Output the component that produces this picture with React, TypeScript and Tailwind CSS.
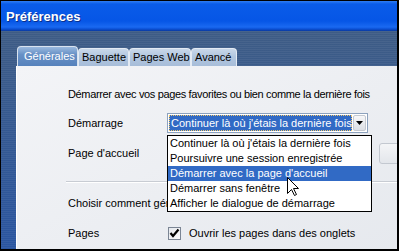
const startOptions = [
  "Continuer là où j'étais la dernière fois",
  'Poursuivre une session enregistrée',
  "Démarrer avec la page d'accueil",
  'Démarrer sans fenêtre',
  'Afficher le dialogue de démarrage',
];

const tabs = [
  { label: 'Générales', width: 'w-[61px]', active: true },
  { label: 'Baguette', width: 'w-[51px]', active: false },
  { label: 'Pages Web', width: 'w-[62px]', active: false },
  { label: 'Avancé', width: 'w-[46px]', active: false },
];

export default function App() {
  return (
    <div className="w-[399px] h-[251px] overflow-hidden bg-black font-['Liberation_Sans',Arial,sans-serif] text-[11px] leading-[13px] text-black">
      <div className="w-[396px] h-[248px] ml-px mt-px flex flex-col">
        {/* TITLE BAR */}
        <div className="h-[30px] shrink-0 pl-[5px] pt-[8px] bg-[linear-gradient(to_bottom,#2f7ef4_0px,#0a5ce9_3px,#0656e6_20px,#1a69f1_26px,#0b50d6_28px,#0a3a9e_30px)]">
          <span className="text-white font-bold text-[13px] leading-[16px] [text-shadow:1px_1px_#0b2f8a]">Préférences</span>
        </div>

        {/* BODY */}
        <div className="flex-1 flex flex-col pl-[15px] pt-[15px] bg-[repeating-linear-gradient(to_bottom,rgba(255,255,255,0.05)_0px,rgba(255,255,255,0.05)_1px,transparent_1px,transparent_2px),linear-gradient(to_bottom,#3e5c85,#2a55a0)]">
          {/* TABS */}
          <div className="h-[20px] ml-px flex items-end">
            {tabs.map((t) =>
              t.active ? (
                <div
                  key={t.label}
                  className={`${t.width} h-[20px] pl-[6px] pt-[3px] rounded-t-[4px] border border-b-0 border-[#d9e3ef] bg-[linear-gradient(to_bottom,#9ab9de,#6790c6_40%,#5682bc)] text-white`}
                >
                  {t.label}
                </div>
              ) : (
                <div
                  key={t.label}
                  className={`${t.width} h-[18px] pl-[3px] pt-[2px] rounded-t-[4px] border border-b-0 border-[#e3eaf3] bg-[linear-gradient(to_bottom,#c9d8ea,#b1c6df_45%,#a7bdd9)]`}
                >
                  {t.label}
                </div>
              ),
            )}
          </div>

          {/* PANEL */}
          <div className="flex-1 relative overflow-hidden border-l border-white bg-[linear-gradient(to_bottom_right,#f3f4f7,#e6e9ee)] pl-[51px] pt-[22px]">
            <div className="h-[13px] whitespace-nowrap tracking-[-0.35px]">Démarrer avec vos pages favorites ou bien comme la dernière fois</div>

            {/* Démarrage */}
            <div className="mt-[12px] h-[20px] flex items-center">
              <div className="w-[99px] shrink-0">Démarrage</div>
              <div className="w-[201px] h-[20px] shrink-0 border border-[#8da2bd] bg-white p-px flex gap-px">
                <div className="w-[183px] h-[16px] bg-[#316ac5] border border-dotted border-[#f2c86c] text-white pl-px leading-[14px] whitespace-nowrap">
                  Continuer là où j'étais la dernière fois
                </div>
                <div className="w-[15px] h-[16px] flex items-center justify-center rounded-[2px] bg-[linear-gradient(to_bottom,#f7f7f8,#dcdfe4)] border border-[#c4c9d1]">
                  <svg width="7" height="4" viewBox="0 0 7 4">
                    <path d="M0 0 H7 L3.5 4 Z" fill="#000" />
                  </svg>
                </div>
              </div>
            </div>

            {/* Page d'accueil */}
            <div className="mt-[10px] h-[21px] flex items-center">
              <div className="w-[99px] shrink-0">Page d'accueil</div>
              <div className="w-[204px] h-[21px] shrink-0 border border-[#8da2bd] bg-white" />
              <div className="ml-[8px] w-[90px] h-[21px] shrink-0 rounded-[3px] border border-[#c3c8d0] bg-[linear-gradient(to_bottom,#f4f5f7,#e3e6eb)]" />
            </div>

            {/* SEPARATOR */}
            <div className="mt-[17px] -ml-[2px] border-t border-[#c8ccd3] border-b border-b-white" />

            <div className="mt-[14px] h-[13px] w-[99px] overflow-hidden whitespace-nowrap">Choisir comment gérer les fenêtres</div>

            {/* Pages */}
            <div className="mt-[17px] h-[13px] flex items-center">
              <div className="w-[100px] shrink-0">Pages</div>
              <div className="w-[13px] h-[13px] shrink-0 border border-[#7b8594] bg-[linear-gradient(to_bottom_right,#e4e7ec,#fbfbfc)]">
                <svg width="11" height="11" viewBox="0 0 11 11" className="block">
                  <path d="M1.5 5 L4 8 L9.5 1.5" fill="none" stroke="#000" strokeWidth="2.2" />
                </svg>
              </div>
              <div className="ml-[8px] whitespace-nowrap">Ouvrir les pages dans des onglets</div>
            </div>

            {/* DROPDOWN LIST */}
            <div className="absolute left-[150px] top-[69px] w-[205px] border border-black bg-white">
              {startOptions.map((o, i) => (
                <div
                  key={o}
                  className={`h-[15px] pl-[2px] leading-[15px] whitespace-nowrap ${i === 2 ? 'bg-[#316ac5] text-white' : ''}`}
                >
                  {o}
                </div>
              ))}
            </div>

            {/* CURSOR */}
            <svg width="13" height="20" viewBox="0 0 13 20" className="absolute left-[270px] top-[111px]">
              <path d="M0.5 0.5 L0.5 16.5 L4.5 12.5 L7.5 18.5 L9.5 17.5 L6.5 11.5 L11.5 11.5 Z" fill="#fff" stroke="#000" strokeWidth="1" />
            </svg>
          </div>
        </div>
      </div>
    </div>
  );
}
